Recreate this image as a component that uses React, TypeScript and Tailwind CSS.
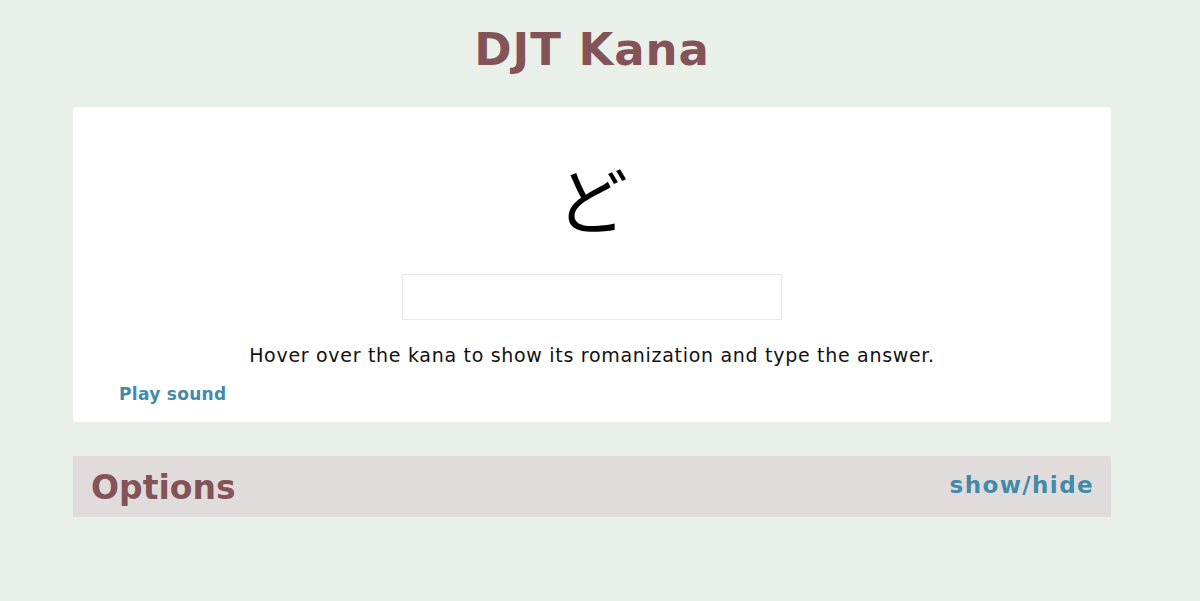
export default function App() {
  return (
    <div className="min-h-[601px] bg-[#e9f0e9] font-['DejaVu_Sans',Verdana,sans-serif]">
      <div className="w-[1184px] pt-[22px]">
        <h1 className="text-center text-[45px] leading-[56px] font-bold tracking-[0.9px] text-[#845357]">DJT Kana</h1>

        <div className="mx-[73px] mt-[29px] rounded-[3px] bg-white pt-[41px] pb-[15px]">
          <div className="text-center text-[72px] leading-[98px] font-['Noto_Sans_CJK_JP',sans-serif] text-black" title="do">
            ど
          </div>
          <div className="mt-[28px] flex justify-center">
            <input
              type="text"
              className="h-[46px] w-[380px] border border-[#e6e6e6] bg-white px-2 text-lg outline-none"
            />
          </div>
          <p className="mt-[22px] text-center text-[19px] leading-[26px] tracking-[0.7px] text-[#111]">
            Hover over the kana to show its romanization and type the answer.
          </p>
          <a href="#" className="ml-[46px] mt-[14px] inline-block text-[17px] leading-[24px] font-bold tracking-[0.3px] text-[#428aaa]">
            Play sound
          </a>
        </div>

        <div className="mx-[73px] mt-[34px] flex h-[61px] items-center justify-between rounded-tr-[3px] bg-[#e1dcdc] pl-[18px] pr-[17px]">
          <h2 className="text-[33px] leading-[40px] font-bold text-[#845357] pt-[2px]">Options</h2>
          <a href="#" className="text-[23px] leading-[28px] font-bold tracking-[1.4px] text-[#428aaa] pb-[3px]">
            show/hide
          </a>
        </div>
      </div>
    </div>
  );
}
